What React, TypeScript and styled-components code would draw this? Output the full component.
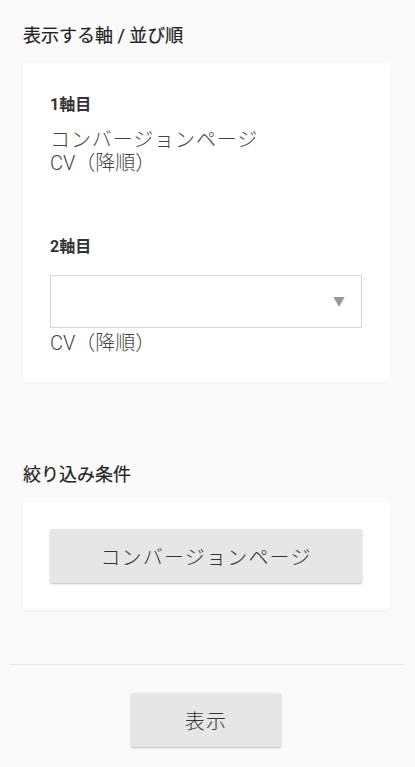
import React from "react";
import styled, { createGlobalStyle } from "styled-components";

const GlobalStyle = createGlobalStyle`
  html, body {
    margin: 0;
    padding: 0;
    background: #fafafa;
  }
  body {
    font-family: Roboto, "Noto Sans CJK JP", "Noto Sans", sans-serif;
    color: #333;
  }
  * { box-sizing: border-box; }
`;

const Page = styled.div`
  padding: 24px 12px 21px 9px;
  display: flex;
  flex-direction: column;
`;

const Section = styled.section<{ $gap?: number }>`
  padding: 0 13px 0 14px;
  margin-bottom: ${(p) => p.$gap ?? 0}px;
`;

const SectionTitle = styled.h2`
  margin: 0 0 15px;
  font-size: 18px;
  line-height: 24px;
  font-weight: 400;
  color: #222;
  -webkit-text-stroke: 0.2px #222;
`;

const Card = styled.div<{ $padTop: number; $padBottom: number }>`
  background: #fff;
  box-shadow: 0 1px 2px rgba(0, 0, 0, 0.05);
  padding: ${(p) => p.$padTop}px 28px ${(p) => p.$padBottom}px 27px;
  display: flex;
  flex-direction: column;
`;

const AxisLabel = styled.div<{ $top?: number }>`
  margin-top: ${(p) => p.$top ?? 0}px;
  font-size: 16px;
  line-height: 24px;
  font-weight: 700;
  color: #333;
`;

const ValueText = styled.div<{ $wide?: boolean; $top?: number }>`
  margin-top: ${(p) => p.$top ?? 0}px;
  font-size: 20px;
  line-height: 23px;
  font-weight: 300;
  color: #444;
  letter-spacing: ${(p) => (p.$wide ? "0.9px" : "0")};
`;

const SelectBox = styled.div`
  margin-top: 16px;
  height: 53px;
  border: 1px solid #d6d6d6;
  background: #fff;
  display: flex;
  align-items: center;
  justify-content: flex-end;
  padding-right: 16px;
`;

const Caret = styled.span`
  font-size: 12px;
  color: #999;
  line-height: 1;
`;

const GrayButton = styled.button<{ $width?: number }>`
  width: ${(p) => (p.$width ? `${p.$width}px` : "100%")};
  height: 54px;
  border: none;
  border-radius: 2px;
  background: #e6e6e6;
  box-shadow: 0 1px 2px rgba(0, 0, 0, 0.25);
  font-family: Roboto, "Noto Sans CJK JP", sans-serif;
  font-size: 20px;
  font-weight: 300;
  letter-spacing: 1.2px;
  color: #333;
  padding: 0;
  cursor: pointer;
`;

const Divider = styled.hr`
  border: none;
  border-top: 1px solid #e6e6e6;
  margin: 54px 0 28px;
  width: 100%;
`;

const Footer = styled.div`
  display: flex;
  justify-content: center;
`;

export default function App() {
  return (
    <>
      <GlobalStyle />
      <Page>
        <Section $gap={81}>
          <SectionTitle>表示する軸 / 並び順</SectionTitle>
          <Card $padTop={30} $padBottom={27}>
            <AxisLabel>1軸目</AxisLabel>
            <ValueText $wide $top={12}>コンバージョンページ</ValueText>
            <ValueText>CV（降順）</ValueText>
            <AxisLabel $top={60}>2軸目</AxisLabel>
            <SelectBox>
              <Caret>▼</Caret>
            </SelectBox>
            <ValueText $top={4}>CV（降順）</ValueText>
          </Card>
        </Section>
        <Section>
          <SectionTitle>絞り込み条件</SectionTitle>
          <Card $padTop={27} $padBottom={27}>
            <GrayButton>コンバージョンページ</GrayButton>
          </Card>
        </Section>
        <Divider />
        <Footer>
          <GrayButton $width={150}>表示</GrayButton>
        </Footer>
      </Page>
    </>
  );
}
